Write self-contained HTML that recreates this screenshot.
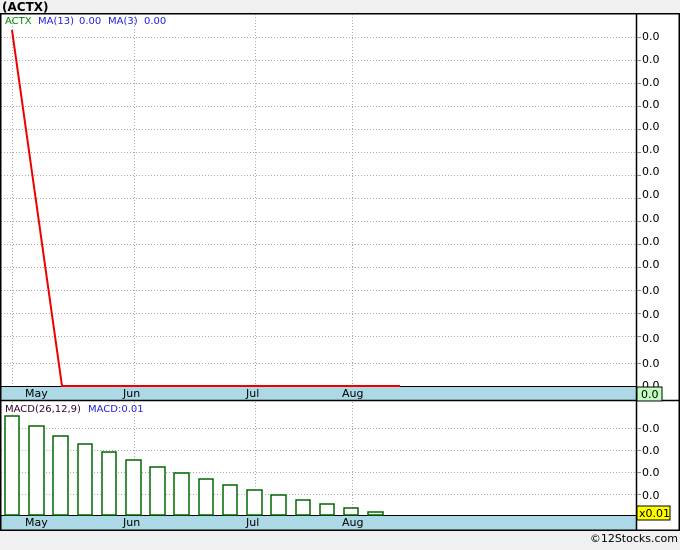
<!DOCTYPE html><html><head><style>body{margin:0;background:#f0f0f0;width:680px;height:546px;overflow:hidden;font-family:Verdana,"DejaVu Sans",sans-serif}</style></head><body>
<svg width="680" height="546" xmlns="http://www.w3.org/2000/svg" font-family="DejaVu Sans, Verdana, sans-serif">
<rect x="0" y="0" width="680" height="546" fill="#f0f0f0"/>
<text x="2" y="11" font-size="12" font-weight="bold" fill="#000">(ACTX)</text>
<rect x="0" y="13" width="680" height="518" fill="#fff"/>
<g stroke="#aaa" stroke-dasharray="1,2" stroke-width="1">
<line x1="1" y1="37.5" x2="636" y2="37.5"/><line x1="1" y1="60.5" x2="636" y2="60.5"/><line x1="1" y1="83.5" x2="636" y2="83.5"/><line x1="1" y1="106.5" x2="636" y2="106.5"/><line x1="1" y1="129.5" x2="636" y2="129.5"/><line x1="1" y1="152.5" x2="636" y2="152.5"/><line x1="1" y1="175.5" x2="636" y2="175.5"/><line x1="1" y1="198.5" x2="636" y2="198.5"/><line x1="1" y1="221.5" x2="636" y2="221.5"/><line x1="1" y1="244.5" x2="636" y2="244.5"/><line x1="1" y1="267.5" x2="636" y2="267.5"/><line x1="1" y1="290.5" x2="636" y2="290.5"/><line x1="1" y1="313.5" x2="636" y2="313.5"/><line x1="1" y1="336.5" x2="636" y2="336.5"/><line x1="1" y1="363.5" x2="636" y2="363.5"/>
<line x1="12.5" y1="14" x2="12.5" y2="386"/><line x1="134.5" y1="14" x2="134.5" y2="386"/><line x1="255.5" y1="14" x2="255.5" y2="386"/><line x1="352.5" y1="14" x2="352.5" y2="386"/>
<line x1="1" y1="428.5" x2="636" y2="428.5"/><line x1="1" y1="450.5" x2="636" y2="450.5"/><line x1="1" y1="472.5" x2="636" y2="472.5"/><line x1="1" y1="494.5" x2="636" y2="494.5"/>
<line x1="12.5" y1="402" x2="12.5" y2="515"/><line x1="134.5" y1="402" x2="134.5" y2="515"/><line x1="255.5" y1="402" x2="255.5" y2="515"/><line x1="352.5" y1="402" x2="352.5" y2="515"/>
</g>
<rect x="1" y="386" width="635" height="14" fill="#add8e6"/>
<rect x="1" y="515" width="635" height="15" fill="#add8e6"/>
<g fill="none" stroke="#000" stroke-width="1.5">
<rect x="0.75" y="13.75" width="678.5" height="516.5"/>
<line x1="636.5" y1="13" x2="636.5" y2="531"/>
<line x1="0" y1="400.5" x2="680" y2="400.5"/>
<line x1="0" y1="386.5" x2="636" y2="386.5" stroke-width="1"/>
<line x1="0" y1="515.5" x2="636" y2="515.5" stroke-width="1"/>
</g>
<g stroke="#888" stroke-width="1">
<line x1="637" y1="37.5" x2="641" y2="37.5"/><line x1="637" y1="60.5" x2="641" y2="60.5"/><line x1="637" y1="83.5" x2="641" y2="83.5"/><line x1="637" y1="106.5" x2="641" y2="106.5"/><line x1="637" y1="129.5" x2="641" y2="129.5"/><line x1="637" y1="152.5" x2="641" y2="152.5"/><line x1="637" y1="175.5" x2="641" y2="175.5"/><line x1="637" y1="198.5" x2="641" y2="198.5"/><line x1="637" y1="221.5" x2="641" y2="221.5"/><line x1="637" y1="244.5" x2="641" y2="244.5"/><line x1="637" y1="267.5" x2="641" y2="267.5"/><line x1="637" y1="290.5" x2="641" y2="290.5"/><line x1="637" y1="313.5" x2="641" y2="313.5"/><line x1="637" y1="336.5" x2="641" y2="336.5"/><line x1="637" y1="363.5" x2="641" y2="363.5"/>
<line x1="637" y1="428.5" x2="641" y2="428.5"/><line x1="637" y1="450.5" x2="641" y2="450.5"/><line x1="637" y1="472.5" x2="641" y2="472.5"/><line x1="637" y1="494.5" x2="641" y2="494.5"/>
</g>
<polyline points="12,30 62,386 400,386" fill="none" stroke="#e00" stroke-width="2"/>
<g fill="#fff" stroke="#060" stroke-width="1.5">
<rect x="5" y="416" width="14" height="99"/><rect x="29" y="426" width="15" height="89"/><rect x="53" y="436" width="15" height="79"/><rect x="78" y="444" width="14" height="71"/><rect x="102" y="452" width="14" height="63"/><rect x="126" y="460" width="15" height="55"/><rect x="150" y="467" width="15" height="48"/><rect x="174" y="473" width="15" height="42"/><rect x="199" y="479" width="14" height="36"/><rect x="223" y="485" width="14" height="30"/><rect x="247" y="490" width="15" height="25"/><rect x="271" y="495" width="15" height="20"/><rect x="296" y="500" width="14" height="15"/><rect x="320" y="504" width="14" height="11"/><rect x="344" y="508" width="14" height="7"/><rect x="368" y="512" width="15" height="3"/>
</g>
<g font-size="11" fill="#000">
<text x="642" y="40">0.0</text><text x="642" y="63">0.0</text><text x="642" y="86">0.0</text><text x="642" y="108">0.0</text><text x="642" y="130">0.0</text><text x="642" y="153">0.0</text><text x="642" y="175">0.0</text><text x="642" y="198">0.0</text><text x="642" y="222">0.0</text><text x="642" y="245">0.0</text><text x="642" y="268">0.0</text><text x="642" y="294">0.0</text><text x="642" y="318">0.0</text><text x="642" y="342">0.0</text><text x="642" y="367">0.0</text><text x="642" y="389">0.0</text>
<text x="642" y="432">0.0</text><text x="642" y="454">0.0</text><text x="642" y="476">0.0</text><text x="642" y="499">0.0</text>
</g>
<rect x="637" y="387" width="25" height="14" fill="#c0ffc0" stroke="#000"/>
<text x="641" y="398" font-size="11">0.0</text>
<rect x="637" y="506" width="33" height="14" fill="#ff0" stroke="#000"/>
<text x="639" y="517" font-size="11">x0.01</text>
<g font-size="11" fill="#000"><text x="25" y="397">May</text><text x="123" y="397">Jun</text><text x="246" y="397">Jul</text><text x="342" y="397">Aug</text>
<text x="25" y="526">May</text><text x="123" y="526">Jun</text><text x="246" y="526">Jul</text><text x="342" y="526">Aug</text></g>
<g font-size="10"><text x="5" y="24" fill="#080">ACTX</text><text x="38" y="24" fill="#22d">MA(13)</text><text x="79" y="24" fill="#22d">0.00</text><text x="108" y="24" fill="#22d">MA(3)</text><text x="144" y="24" fill="#22d">0.00</text>
<text x="5" y="412" fill="#303">MACD(26,12,9)</text><text x="88" y="412" fill="#22d">MACD:0.01</text></g>
<text x="678" y="542" font-size="11" fill="#000" text-anchor="end">©12Stocks.com</text>
</svg></body></html>
